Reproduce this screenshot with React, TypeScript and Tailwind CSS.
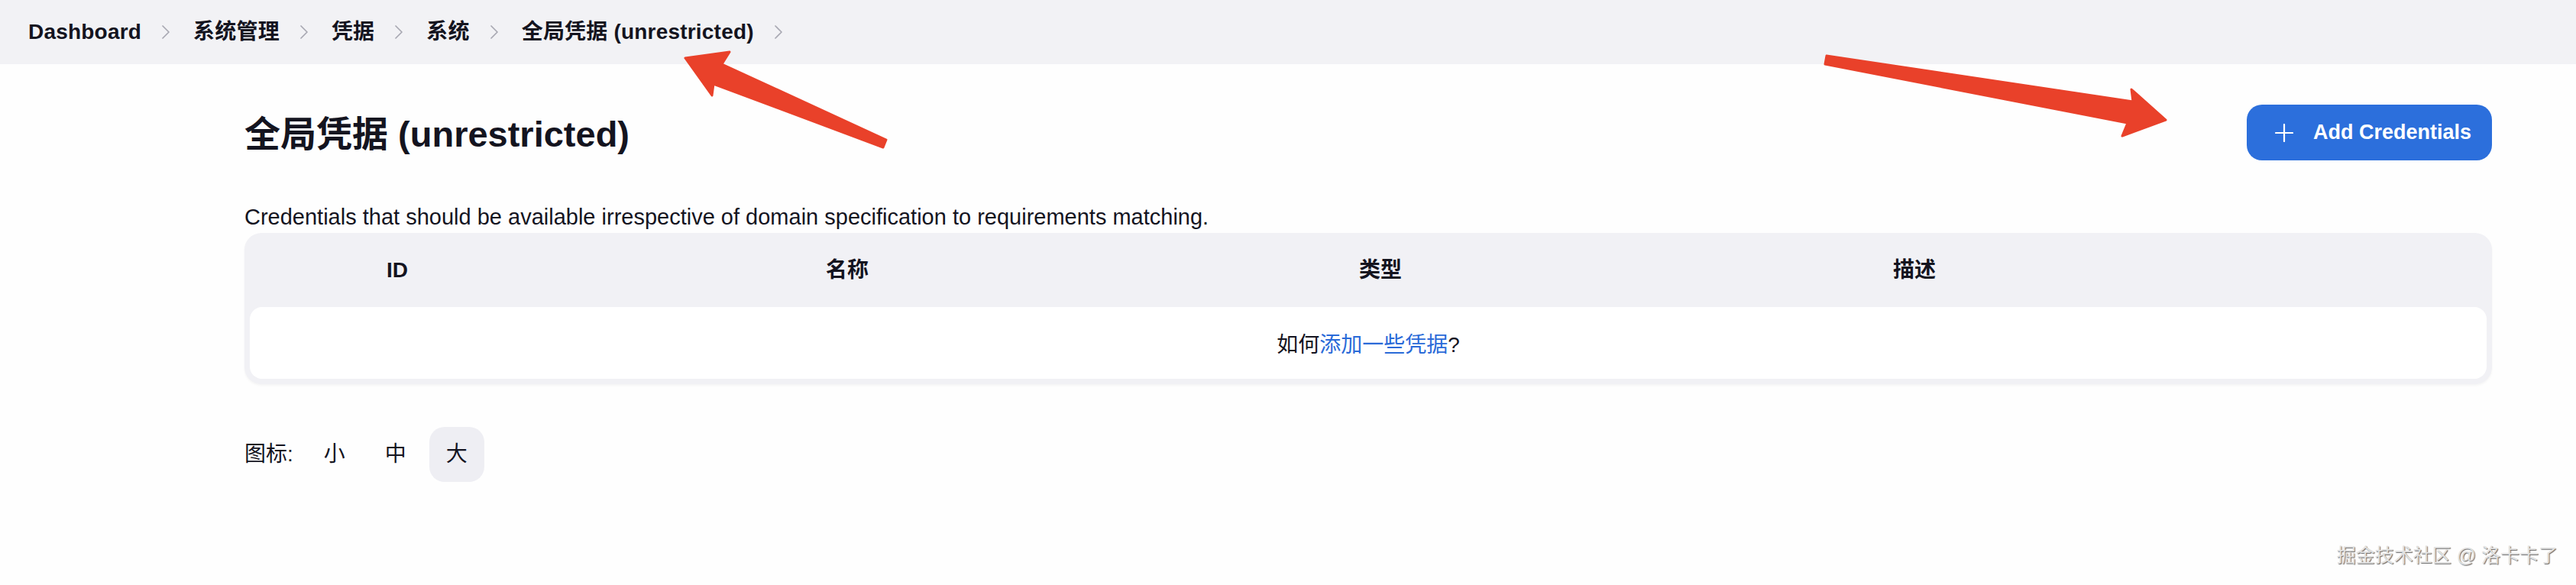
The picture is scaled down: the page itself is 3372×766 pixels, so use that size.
import React from "react";

const FONT = "font-['Liberation_Sans','Noto_Sans_CJK_SC',sans-serif]";

function Chevron() {
  return (
    <svg className="ml-[26px] mr-[30px] shrink-0" width="12" height="20" viewBox="0 0 12 20" fill="none">
      <path d="M2 2 L10 10 L2 18" stroke="#a8a8b2" strokeWidth="1.7" strokeLinecap="round" strokeLinejoin="round" />
    </svg>
  );
}

function Arrows() {
  return (
    <svg className="absolute left-0 top-0 pointer-events-none" width="3372" height="766" viewBox="0 0 3372 766">
      <polygon
        points="897,76 955,68 945,84 1160,183 1156,193 934,110 932,125"
        fill="#e9412a"
        stroke="#e9412a"
        strokeWidth="3"
        strokeLinejoin="round"
      />
      <polygon
        points="2835,157 2790,117 2792,133 2391,73 2389,84 2785,161 2778,178"
        fill="#e9412a"
        stroke="#e9412a"
        strokeWidth="3"
        strokeLinejoin="round"
      />
    </svg>
  );
}

export default function App() {
  const crumbs = ["Dashboard", "系统管理", "凭据", "系统", "全局凭据 (unrestricted)"];
  return (
    <div className={`relative w-[3372px] h-[766px] bg-[#fefefe] text-[#14141f] ${FONT} overflow-hidden`}>
      {/* Breadcrumb bar */}
      <div className="h-[84px] bg-[#f2f2f5] flex items-center pl-[37px]">
        {crumbs.map((c) => (
          <React.Fragment key={c}>
            <span className="text-[28px] font-bold leading-none whitespace-nowrap tracking-[0.2px]">{c}</span>
            <Chevron />
          </React.Fragment>
        ))}
      </div>

      {/* Main */}
      <div className="pl-[320px] pr-[110px]">
        <div className="mt-[53px] h-[73px] flex items-center justify-between">
          <h1 className="text-[47px] font-bold leading-none whitespace-nowrap mt-[4px]">全局凭据 (unrestricted)</h1>
          <button className="h-[73px] w-[321px] rounded-[20px] bg-[#2c6fdc] text-white flex items-center pl-[37px] gap-[26px]">
            <svg width="24" height="24" viewBox="0 0 24 24" fill="none">
              <path d="M12 1 V23 M1 12 H23" stroke="white" strokeWidth="2.2" strokeLinecap="round" />
            </svg>
            <span className="text-[27px] font-semibold leading-none whitespace-nowrap">Add Credentials</span>
          </button>
        </div>

        <p className="mt-[57px] text-[29px] leading-[34px] whitespace-nowrap">
          Credentials that should be available irrespective of domain specification to requirements matching.
        </p>

        <div className="mt-[4px] rounded-[22px] bg-[#f1f1f5] px-[7px] pb-[7px] shadow-[0_2px_3px_rgba(0,0,0,0.04)]">
          <div className="h-[97px] grid grid-cols-[179px_575px_698px_699px_1fr] items-center text-[28px] font-bold leading-none">
            <div />
            <div>ID</div>
            <div>名称</div>
            <div>类型</div>
            <div>描述</div>
          </div>
          <div className="h-[94px] rounded-[16px] bg-white flex items-center justify-center pt-[6px] text-[28px] leading-none">
            <span>
              如何<span className="text-[#2a6ad8]">添加一些凭据</span>?
            </span>
          </div>
        </div>

        <div className="mt-[56px] flex items-center text-[28px] leading-none">
          <span className="mr-[18px]">图标:</span>
          <div className="flex gap-[8px]">
            <div className="w-[72px] h-[72px] rounded-[20px] flex items-center justify-center">小</div>
            <div className="w-[72px] h-[72px] rounded-[20px] flex items-center justify-center">中</div>
            <div className="w-[72px] h-[72px] rounded-[20px] bg-[#eeeef3] flex items-center justify-center">大</div>
          </div>
        </div>
      </div>

      {/* Watermark */}
      <div className="absolute right-[24px] top-[715px] text-[25px] leading-none text-[#e2e2e2] whitespace-nowrap [text-shadow:1px_1px_1px_#666,-1px_-1px_0_#fff]">
        掘金技术社区 @ 洛卡卡了
      </div>

      <Arrows />
    </div>
  );
}
